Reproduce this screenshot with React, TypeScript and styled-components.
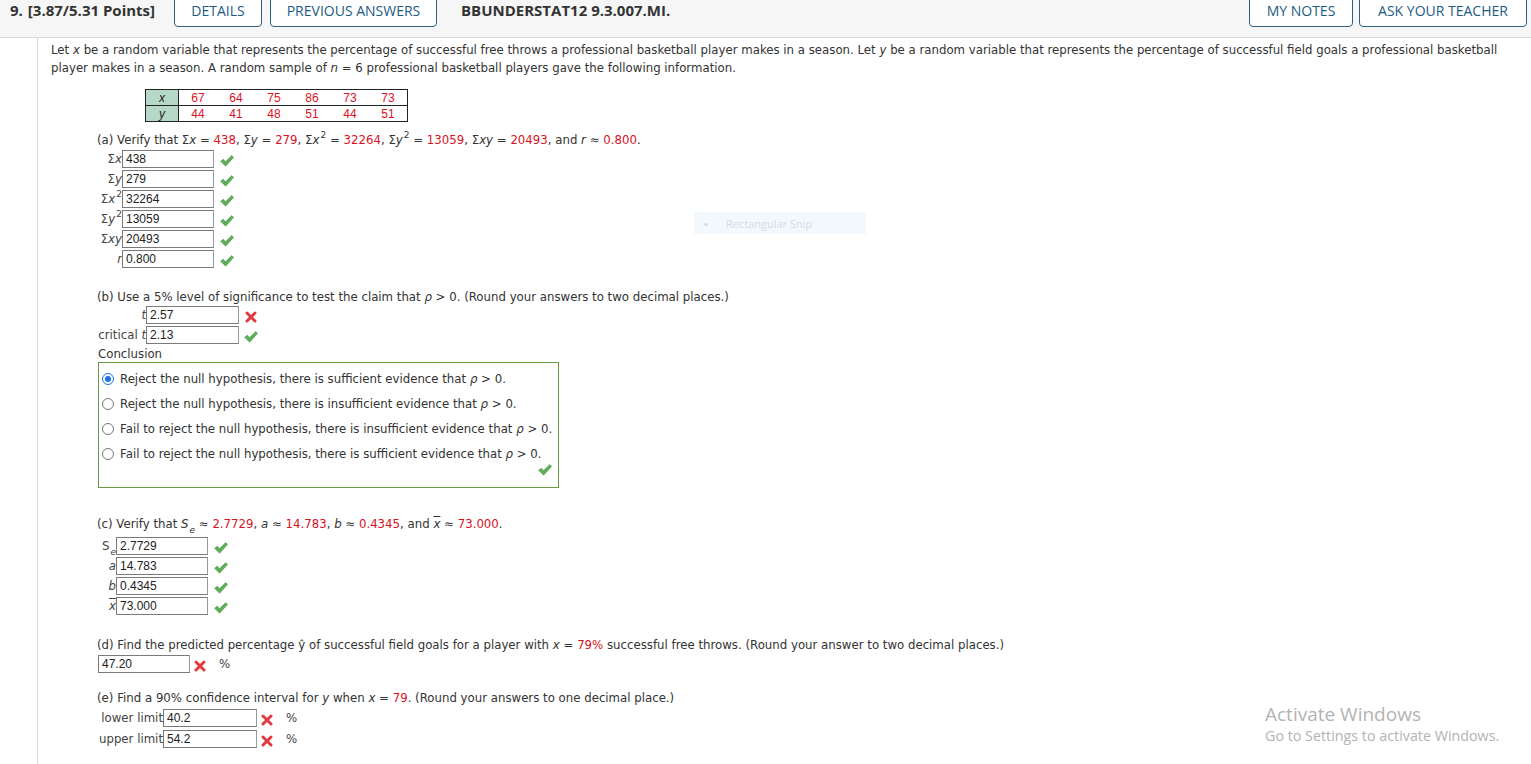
import React from "react";
import styled, { createGlobalStyle } from "styled-components";

const GlobalStyle = createGlobalStyle`
  html, body {
    margin: 0;
    padding: 0;
    background: #fff;
  }
  body {
    font-family: "DejaVu Sans", Verdana, sans-serif;
    color: #333;
  }
`;

const Page = styled.div`
  width: 1531px;
  height: 764px;
  overflow: hidden;
  position: relative;
`;

const Header = styled.div`
  height: 37px;
  background: #f6f6f6;
  border-bottom: 1px solid #dcdcdc;
  display: flex;
  align-items: flex-start;
  font-family: "Open Sans", sans-serif;
  font-size: 15px;
  font-weight: 700;
  color: #333;
`;

const QNum = styled.div`
  padding: 1px 0 0 10px;
  line-height: 18px;
  width: 150px;
  display: flex;
  gap: 5px;
  flex: none;
`;

const HeaderButton = styled.div<{ $w: number }>`
  width: ${(p) => p.$w}px;
  height: 31px;
  margin-top: -4px;
  box-sizing: border-box;
  border: 1px solid #30607e;
  border-radius: 4px;
  background: #fff;
  color: #1d5b84;
  font-weight: 500;
  font-size: 14px;
  line-height: 18px;
  display: flex;
  align-items: flex-start;
  justify-content: center;
  padding-top: 5px;
  flex: none;
`;

const HeaderGap = styled.div<{ $w: number }>`
  width: ${(p) => p.$w}px;
  flex: none;
`;

const Code = styled.div`
  padding: 1px 0 0 0;
  line-height: 18px;
  flex: 1;
`;

const Body = styled.div`
  margin-left: 37px;
  border-left: 1px solid #dcdcdc;
  padding: 3px 0 0 13px;
  height: 730px;
  font-size: 11.75px;
  line-height: 18px;
`;

const Para = styled.p`
  margin: 0;
  width: 1460px;
`;

const Red = styled.span`
  color: #d8121e;
`;

const Var = styled.i`
  font-style: italic;
`;

const Table = styled.table`
  margin: 12px 0 0 94px;
  border-collapse: collapse;
  font-family: "Liberation Sans", Arial, sans-serif;
  font-size: 12px;
  line-height: 14px;
`;

const HeadCell = styled.td`
  background: #b6d8c8;
  border: 1px solid #222;
  width: 32px;
  text-align: center;
  font-style: italic;
  color: #222;
  padding: 1px 0 0 0;
`;

const ValCell = styled.td<{ $last?: boolean }>`
  color: #d8121e;
  border-top: 1px solid #222;
  border-bottom: 1px solid #222;
  border-right: ${(p) => (p.$last ? "1px solid #222" : "none")};
  width: 38px;
  text-align: center;
  padding: 1px 0 0 0;
`;

const Part = styled.div<{ $top: number; $left?: number }>`
  margin-top: ${(p) => p.$top}px;
  margin-left: ${(p) => p.$left ?? 46}px;
`;

const Title = styled.div<{ $after?: number }>`
  margin-bottom: ${(p) => p.$after ?? 0}px;
  white-space: nowrap;
`;

const Row = styled.div<{ $h?: number }>`
  display: flex;
  align-items: center;
  height: ${(p) => p.$h ?? 20}px;
`;

const Label = styled.div<{ $w: number }>`
  width: ${(p) => p.$w}px;
  text-align: right;
  color: #444;
  white-space: nowrap;
  flex: none;
`;

const Box = styled.div<{ $w?: number }>`
  width: ${(p) => p.$w ?? 92}px;
  height: 18px;
  box-sizing: border-box;
  border: 1px solid #7a7a7a;
  border-right-color: #9a9a9a;
  font-family: "Liberation Sans", Arial, sans-serif;
  font-size: 12px;
  line-height: 16px;
  padding-left: 3px;
  color: #222;
  background: #fff;
  flex: none;
`;

const Mark = styled.span<{ $gap?: number }>`
  display: inline-flex;
  margin-left: ${(p) => p.$gap ?? 6}px;
  padding-top: 4px;
`;

const Unit = styled.span`
  margin-left: 13px;
  color: #444;
`;

const Sup = styled.sup`
  font-size: 9px;
  line-height: 0;
  vertical-align: 6px;
  margin-left: 1px;
`;

const SubE = styled.sub`
  font-size: 9px;
  font-style: italic;
  line-height: 0;
  vertical-align: -5px;
  margin-left: 1px;
`;

const Bar = styled.span`
  text-decoration: overline;
`;

const Conclusion = styled.div`
  margin-left: 1px;
`;

const Choices = styled.div`
  margin: -1px 0 0 1px;
  width: 461px;
  height: 126px;
  box-sizing: border-box;
  border: 1px solid #6a9a40;
  padding: 3px 0 0 3px;
  position: relative;
`;

const Choice = styled.div`
  display: flex;
  align-items: center;
  height: 25px;
  gap: 6px;
  color: #333;
  white-space: nowrap;
`;

const Radio = styled.span<{ $on?: boolean }>`
  width: 12px;
  height: 12px;
  box-sizing: border-box;
  border-radius: 50%;
  border: 1px solid ${(p) => (p.$on ? "#1a73e8" : "#777")};
  background: #fff;
  display: inline-flex;
  align-items: center;
  justify-content: center;
  flex: none;
  &::after {
    content: "";
    width: 6px;
    height: 6px;
    border-radius: 50%;
    background: ${(p) => (p.$on ? "#1a73e8" : "transparent")};
  }
`;

const BoxCheck = styled.span`
  position: absolute;
  right: 6px;
  bottom: 6px;
`;

const Snip = styled.div`
  position: absolute;
  left: 694px;
  top: 212px;
  width: 172px;
  height: 22px;
  background: #f3f8fd;
  font-family: "Open Sans", sans-serif;
  font-size: 11px;
  color: #d4dce4;
  display: flex;
  align-items: center;
  gap: 18px;
  padding-left: 10px;
  box-sizing: border-box;
`;

const Watermark = styled.div`
  position: absolute;
  left: 1265px;
  top: 702px;
  font-family: "Open Sans", sans-serif;
  color: #b3b3b3;
`;

const WmTitle = styled.div`
  font-size: 19px;
  line-height: 24px;
`;

const WmSub = styled.div`
  font-size: 14.3px;
  line-height: 20px;
`;

const Check = () => (
  <svg width="14" height="12" viewBox="0 0 14 12">
    <path
      d="M0.6 6.2 L3.2 4.2 L5.6 6.6 L11.8 0.6 L13.6 2.4 L5.6 11.2 Z"
      fill="#5fae5a"
      stroke="#4a9a48"
      strokeWidth="0.6"
      strokeLinejoin="round"
    />
  </svg>
);

const Cross = () => (
  <svg width="12" height="12" viewBox="0 0 12 12">
    <path d="M2 2 L10 10 M10 2 L2 10" stroke="#e23a3f" strokeWidth="3" strokeLinecap="round" />
  </svg>
);

const rho = <Var>ρ</Var>;

const App: React.FC = () => {
  const xs = ["67", "64", "75", "86", "73", "73"];
  const ys = ["44", "41", "48", "51", "44", "51"];

  const partA: [React.ReactNode, string][] = [
    [<>Σ<Var>x</Var></>, "438"],
    [<>Σ<Var>y</Var></>, "279"],
    [<>Σ<Var>x</Var><Sup>2</Sup></>, "32264"],
    [<>Σ<Var>y</Var><Sup>2</Sup></>, "13059"],
    [<>Σ<Var>xy</Var></>, "20493"],
    [<Var>r</Var>, "0.800"],
  ];

  const partC: [React.ReactNode, string][] = [
    [<>S<SubE>e</SubE></>, "2.7729"],
    [<Var>a</Var>, "14.783"],
    [<Var>b</Var>, "0.4345"],
    [<Bar><Var>x</Var></Bar>, "73.000"],
  ];

  const choices = [
    "Reject the null hypothesis, there is sufficient evidence that",
    "Reject the null hypothesis, there is insufficient evidence that",
    "Fail to reject the null hypothesis, there is insufficient evidence that",
    "Fail to reject the null hypothesis, there is sufficient evidence that",
  ];

  return (
    <Page>
      <GlobalStyle />
      <Header>
        <QNum>
          <span>9.</span>
          <span>[3.87/5.31 Points]</span>
        </QNum>
        <HeaderGap $w={14} />
        <HeaderButton $w={88}>DETAILS</HeaderButton>
        <HeaderGap $w={8} />
        <HeaderButton $w={167}>PREVIOUS ANSWERS</HeaderButton>
        <HeaderGap $w={24} />
        <Code>BBUNDERSTAT12 9.3.007.MI.</Code>
        <HeaderButton $w={104}>MY NOTES</HeaderButton>
        <HeaderGap $w={6} />
        <HeaderButton $w={168}>ASK YOUR TEACHER</HeaderButton>
        <HeaderGap $w={4} />
      </Header>

      <Body>
        <Para>
          Let <Var>x</Var> be a random variable that represents the percentage of successful free throws a
          professional basketball player makes in a season. Let <Var>y</Var> be a random variable that
          represents the percentage of successful field goals a professional basketball player makes in a
          season. A random sample of <Var>n</Var> = 6 professional basketball players gave the following
          information.
        </Para>

        <Table>
          <tbody>
            <tr>
              <HeadCell>x</HeadCell>
              {xs.map((v, i) => (
                <ValCell key={i} $last={i === xs.length - 1}>{v}</ValCell>
              ))}
            </tr>
            <tr>
              <HeadCell>y</HeadCell>
              {ys.map((v, i) => (
                <ValCell key={i} $last={i === ys.length - 1}>{v}</ValCell>
              ))}
            </tr>
          </tbody>
        </Table>

        <Part $top={9}>
          <Title>
            (a) Verify that Σ<Var>x</Var> = <Red>438</Red>, Σ<Var>y</Var> = <Red>279</Red>, Σ<Var>x</Var>
            <Sup>2</Sup> = <Red>32264</Red>, Σ<Var>y</Var>
            <Sup>2</Sup> = <Red>13059</Red>, Σ<Var>xy</Var> = <Red>20493</Red>, and <Var>r</Var> ≈{" "}
            <Red>0.800</Red>.
          </Title>
          {partA.map(([label, value], i) => (
            <Row key={i}>
              <Label $w={25}>{label}</Label>
              <Box>{value}</Box>
              <Mark $gap={6}>
                <Check />
              </Mark>
            </Row>
          ))}
        </Part>

        <Part $top={19}>
          <Title $after={-1}>
            (b) Use a 5% level of significance to test the claim that {rho} &gt; 0. (Round your answers to two
            decimal places.)
          </Title>
          <Row>
            <Label $w={49}>
              <Var>t</Var>
            </Label>
            <Box $w={93}>2.57</Box>
            <Mark $gap={6}>
              <Cross />
            </Mark>
          </Row>
          <Row>
            <Label $w={49}>
              critical <Var>t</Var>
            </Label>
            <Box $w={93}>2.13</Box>
            <Mark $gap={5}>
              <Check />
            </Mark>
          </Row>
          <Conclusion>Conclusion</Conclusion>
          <Choices>
            {choices.map((c, i) => (
              <Choice key={i}>
                <Radio $on={i === 0} />
                <span>
                  {c} {rho} &gt; 0.
                </span>
              </Choice>
            ))}
            <BoxCheck>
              <Check />
            </BoxCheck>
          </Choices>
        </Part>

        <Part $top={27}>
          <Title $after={3}>
            (c) Verify that <Var>S</Var>
            <SubE>e</SubE> ≈ <Red>2.7729</Red>, <Var>a</Var> ≈ <Red>14.783</Red>, <Var>b</Var> ≈{" "}
            <Red>0.4345</Red>, and{" "}
            <Bar>
              <Var>x</Var>
            </Bar>{" "}
            ≈ <Red>73.000</Red>.
          </Title>
          {partC.map(([label, value], i) => (
            <Row key={i}>
              <Label $w={19}>{label}</Label>
              <Box>{value}</Box>
              <Mark $gap={6}>
                <Check />
              </Mark>
            </Row>
          ))}
        </Part>

        <Part $top={20}>
          <Title>
            (d) Find the predicted percentage ŷ of successful field goals for a player with <Var>x</Var> ={" "}
            <Red>79%</Red> successful free throws. (Round your answer to two decimal places.)
          </Title>
          <Row>
            <Label $w={1} />
            <Box $w={92}>47.20</Box>
            <Mark $gap={4}>
              <Cross />
            </Mark>
            <Unit>%</Unit>
          </Row>
        </Part>

        <Part $top={15}>
          <Title>
            (e) Find a 90% confidence interval for <Var>y</Var> when <Var>x</Var> = <Red>79</Red>. (Round your
            answers to one decimal place.)
          </Title>
          <Row $h={21}>
            <Label $w={66}>lower limit</Label>
            <Box $w={94}>40.2</Box>
            <Mark $gap={4}>
              <Cross />
            </Mark>
            <Unit>%</Unit>
          </Row>
          <Row $h={21}>
            <Label $w={66}>upper limit</Label>
            <Box $w={94}>54.2</Box>
            <Mark $gap={4}>
              <Cross />
            </Mark>
            <Unit>%</Unit>
          </Row>
        </Part>
      </Body>

      <Snip>
        <span>▪</span>
        <span>Rectangular Snip</span>
      </Snip>

      <Watermark>
        <WmTitle>Activate Windows</WmTitle>
        <WmSub>Go to Settings to activate Windows.</WmSub>
      </Watermark>
    </Page>
  );
};

export default App;
